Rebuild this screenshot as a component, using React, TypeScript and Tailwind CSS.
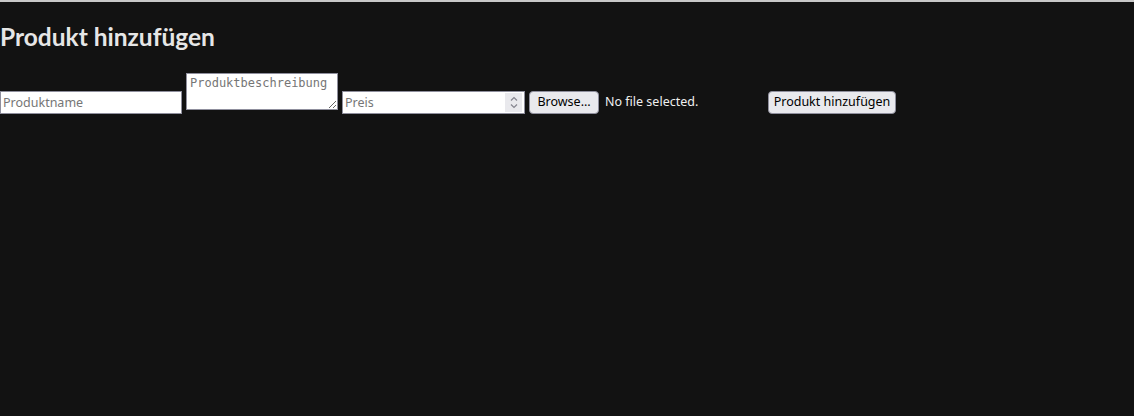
export default function App() {
  return (
    <div className="min-h-screen w-full bg-[#121212] border-t-2 border-[#c8c8c8] font-['Noto_Sans',sans-serif] text-[#e6e6e6]">
      <h2 className="mt-[18px] mb-[20px] font-['Lato',sans-serif] text-[24.5px] leading-[33px] font-bold">Produkt hinzufügen</h2>
      <form className="flex items-start" onSubmit={e => e.preventDefault()}>
        <input
          type="text"
          placeholder="Produktname"
          className="mt-[18px] h-[23px] w-[182px] border border-[#8f8f9d] bg-white px-[2px] text-[12.5px] text-black placeholder:text-[#767676] outline-none"
        />
        <textarea
          placeholder="Produktbeschreibung"
          className="ml-[4px] h-[37px] w-[152px] border border-[#8f8f9d] bg-white px-[3px] py-[2px] font-['DejaVu_Sans_Mono',monospace] text-[12px] leading-[15px] text-black placeholder:text-[#767676] outline-none"
        />
        <div className="relative ml-[4px] mt-[18px] flex">
          <input
            type="number"
            placeholder="Preis"
            className="block h-[23px] w-[183px] border border-[#8f8f9d] bg-white px-[2px] pr-[22px] text-[12.5px] text-black placeholder:text-[#767676] outline-none [appearance:textfield] [&::-webkit-inner-spin-button]:appearance-none [&::-webkit-outer-spin-button]:appearance-none"
          />
          <div className="pointer-events-none absolute right-[3px] top-[2px] flex h-[19px] w-[17px] items-center justify-center bg-[#e9e9ed]">
            <svg width="10" height="15" viewBox="0 0 10 15" fill="none" stroke="#85858f" strokeWidth="1.2">
              <path d="M2 5.5 L5 2.5 L8 5.5" />
              <path d="M2 9.5 L5 12.5 L8 9.5" />
            </svg>
          </div>
        </div>
        <div className="ml-[4px] mt-[18px] flex w-[235px] items-center">
          <button
            type="button"
            className="h-[23px] w-[70px] rounded-[4px] border border-[#8f8f9d] bg-[#e9e9ed] text-[12.5px] text-black"
          >
            Browse…
          </button>
          <span className="ml-[6px] text-[12.5px] text-[#f0f0f0]">No file selected.</span>
        </div>
        <button
          type="submit"
          className="ml-[4px] mt-[18px] h-[23px] w-[128px] rounded-[4px] border border-[#8f8f9d] bg-[#e9e9ed] text-[12.5px] text-black"
        >
          Produkt hinzufügen
        </button>
      </form>
    </div>
  );
}
